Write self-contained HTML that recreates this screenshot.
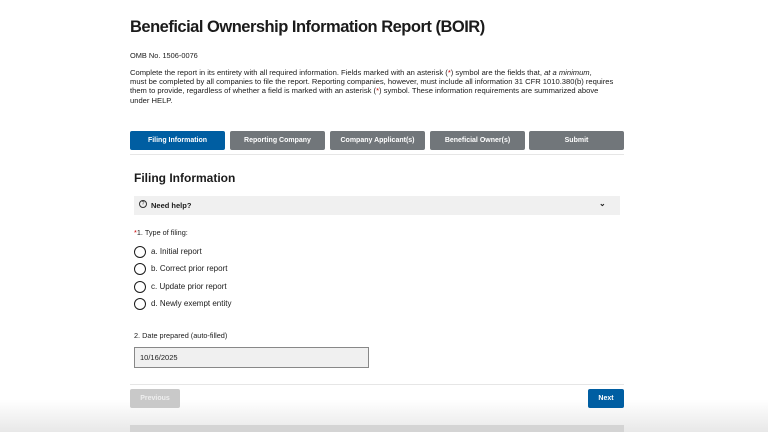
<!DOCTYPE html><html><head><style>
body{margin:0;width:768px;height:432px;overflow:hidden;background:#fff;font-family:"Liberation Sans",sans-serif;color:#1b1b1b;position:relative}
.a{position:absolute}
h1{position:absolute;left:130px;top:18px;margin:0;font-size:16.5px;font-weight:bold;letter-spacing:-0.5px}
.s{font-size:7.4px;line-height:9.2px}
.tab{position:absolute;top:131px;height:19px;width:95px;background:#71767a;color:#fff;font-size:7px;font-weight:bold;text-align:center;line-height:19px;border-radius:2px}
.r{position:absolute;left:134px;width:10px;height:10px;border:1.3px solid #1b1b1b;border-radius:50%}
.rl{position:absolute;left:151px;font-size:8px}
</style></head><body>
<div class="a" style="left:0;top:400px;width:768px;height:32px;background:linear-gradient(#fff,#e8e8e8)"></div>
<div class="a" style="left:130px;top:425px;width:494px;height:7px;background:#d4d4d4"></div>
<h1>Beneficial Ownership Information Report (BOIR)</h1>
<div class="a s" style="left:130px;top:51px">OMB No. 1506-0076</div>
<div class="a s" style="left:130px;top:68px;white-space:nowrap;font-size:7.6px">Complete the report in its entirety with all required information. Fields marked with an asterisk (<span style="color:#c00">*</span>) symbol are the fields that, <i>at a minimum</i>,<br>must be completed by all companies to file the report. Reporting companies, however, must include all information 31 CFR 1010.380(b) requires<br>them to provide, regardless of whether a field is marked with an asterisk (<span style="color:#c00">*</span>) symbol. These information requirements are summarized above<br>under HELP.</div>
<div class="tab" style="left:130px;background:#005ea2">Filing Information</div>
<div class="tab" style="left:230px">Reporting Company</div>
<div class="tab" style="left:330px">Company Applicant(s)</div>
<div class="tab" style="left:430px">Beneficial Owner(s)</div>
<div class="tab" style="left:529px">Submit</div>
<div class="a" style="left:130px;top:154px;width:494px;height:1px;background:#e6e6e6"></div>
<div class="a" style="left:134px;top:171px;font-size:12px;font-weight:bold">Filing Information</div>
<div class="a" style="left:134px;top:196px;width:486px;height:19px;background:#f0f0f0"></div>
<div class="a" style="left:139px;top:200px;width:6px;height:6px;border:1px solid #333;border-radius:50%;font-size:5px;line-height:6px;text-align:center">?</div>
<div class="a" style="left:151px;top:201px;font-size:7.5px;font-weight:bold">Need help?</div>
<div class="a" style="left:599px;top:199px;font-size:8px;font-weight:bold">&#8964;</div>
<div class="a" style="left:134px;top:228px;font-size:7.3px"><span style="color:#c00">*</span>1. Type of filing:</div>
<div class="r" style="top:246px"></div><div class="rl" style="top:247px">a. Initial report</div>
<div class="r" style="top:263px"></div><div class="rl" style="top:264px">b. Correct prior report</div>
<div class="r" style="top:281px"></div><div class="rl" style="top:282px">c. Update prior report</div>
<div class="r" style="top:298px"></div><div class="rl" style="top:299px">d. Newly exempt entity</div>
<div class="a" style="left:134px;top:331px;font-size:7.3px">2. Date prepared (auto-filled)</div>
<div class="a" style="left:134px;top:347px;width:233px;height:19px;background:#f0f0f0;border:1px solid #888;font-size:7.5px;line-height:19px;text-indent:5px">10/16/2025</div>
<div class="a" style="left:130px;top:384px;width:494px;height:1px;background:#e6e6e6"></div>
<div class="a" style="left:130px;top:389px;width:50px;height:19px;background:#c9c9c9;color:#eee;border-radius:2px;font-size:7px;font-weight:bold;text-align:center;line-height:19px">Previous</div>
<div class="a" style="left:588px;top:389px;width:36px;height:19px;background:#005ea2;color:#fff;border-radius:2px;font-size:7px;font-weight:bold;text-align:center;line-height:19px">Next</div>
</body></html>
